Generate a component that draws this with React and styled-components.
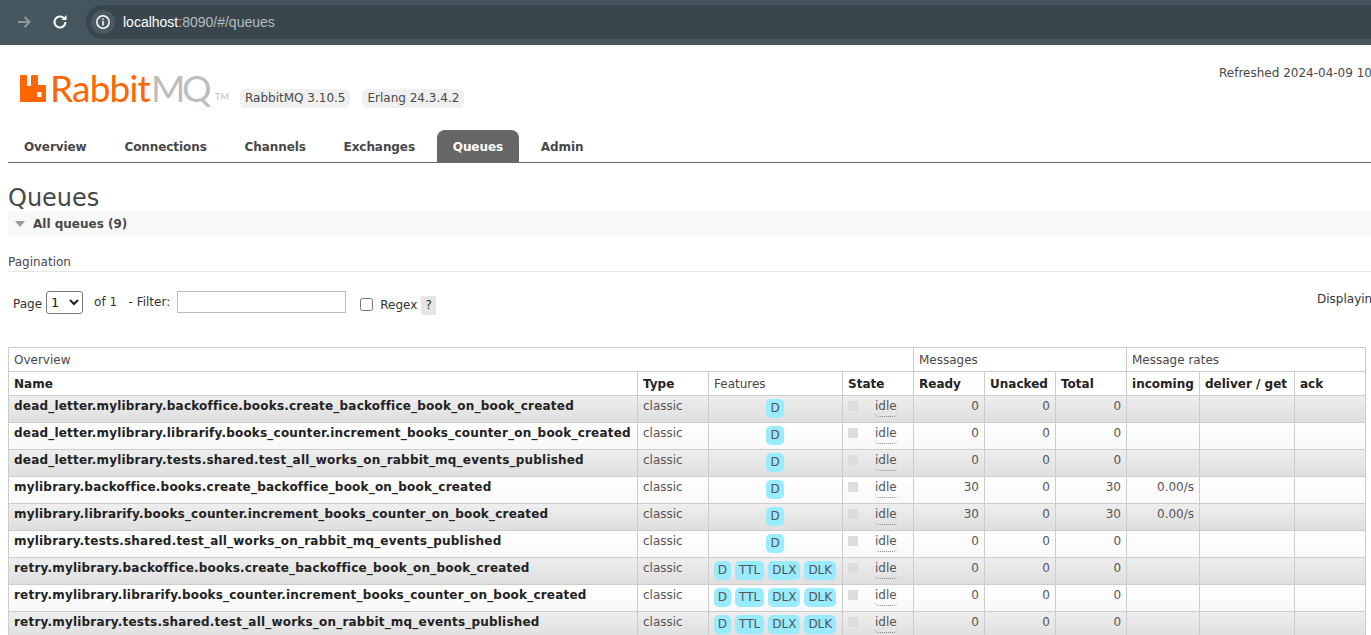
import styled, { createGlobalStyle } from 'styled-components'

const Global = createGlobalStyle`
  html, body {
    margin: 0;
    padding: 0;
    background: #fff;
    overflow: hidden;
  }
  body {
    font-family: "DejaVu Sans", Verdana, sans-serif;
    font-size: 12px;
    color: #484848;
  }
`;

const Page = styled.div`
  width: 1371px;
  height: 635px;
  overflow: hidden;
`;

const BrowserBar = styled.div`
  height: 45px;
  background: #45565f;
  display: flex;
  align-items: flex-start;
  padding: 5px 0 0 16px;
  box-sizing: border-box;
`;

const NavIcon = styled.svg`
  width: 16px;
  height: 16px;
  margin: 9px 20px 0 0;
  fill: none;
  stroke: ${(p) => (p.$dim ? '#8c989e' : '#ffffff')};
  stroke-width: 2;
`;

const AddressBar = styled.div`
  flex: 1;
  height: 34px;
  margin-left: -2px;
  border-radius: 17px 0 0 17px;
  background: #3a464d;
  display: flex;
  align-items: center;
  padding-left: 5px;
  font-family: "Liberation Sans", Arial, sans-serif;
  font-size: 14px;
  color: #b4bcc0;
`;

const InfoBadge = styled.span`
  width: 24px;
  height: 24px;
  border-radius: 50%;
  background: #4a5a62;
  display: flex;
  align-items: center;
  justify-content: center;
  margin-right: 8px;
`;

const Host = styled.span`
  color: #fff;
`;

const Header = styled.div`
  height: 85px;
  position: relative;
  display: flex;
  align-items: flex-start;
  padding: 28px 0 0 20px;
  box-sizing: border-box;
`;

const Logo = styled.div`
  display: flex;
  align-items: flex-end;
  height: 34px;
  width: 204px;
  font-family: Lato, sans-serif;
  font-size: 37px;
  line-height: 34px;
`;

const LogoMark = styled.svg`
  width: 26px;
  height: 27px;
  margin-bottom: 5px;
  flex: none;
`;

const LogoOrange = styled.span`
  color: #ff6600;
  margin: 0 0 2px 4px;
  letter-spacing: -0.8px;
`;

const LogoGrey = styled.span`
  color: #bdbdbd;
  margin: 0 0 2px 1px;
  letter-spacing: -3.5px;
`;

const Tm = styled.span`
  font-size: 9px;
  line-height: 12px;
  color: #bdbdbd;
  margin: 0 0 4px 7px;
`;

const Versions = styled.div`
  display: flex;
  gap: 12px;
  margin: 16px 0 0 16px;
`;

const Version = styled.span`
  background: #f0f0f0;
  border-radius: 5px;
  padding: 2px 5px;
  height: 15px;
  line-height: 15px;
`;

const Refreshed = styled.div`
  position: absolute;
  left: 1219px;
  top: 21px;
  white-space: nowrap;
`;

const Tabs = styled.ul`
  list-style: none;
  display: flex;
  margin: 0 0 0 8px;
  padding: 0;
  height: 32px;
  border-bottom: 1px solid #666;
`;

const Tab = styled.li`
  height: 32px;
  box-sizing: border-box;
  padding: 1px 16px 0;
  margin-right: 5.8px;
  display: flex;
  align-items: center;
  font-weight: bold;
  letter-spacing: -0.08px;
  border-radius: ${(p) => (p.$active ? '8px 8px 0 0' : '0')};
  background: ${(p) => (p.$active ? '#666' : 'transparent')};
  color: ${(p) => (p.$active ? '#fff' : '#484848')};
`;

const Main = styled.div`
  padding: 0 0 0 8px;
`;

const Title = styled.h1`
  margin: 0;
  padding-top: 22px;
  font-size: 24px;
  line-height: 26px;
  font-weight: normal;
`;

const Section = styled.div`
  height: 25px;
  background: #f8f8f8;
  display: flex;
  align-items: center;
  font-weight: bold;
  gap: 8px;
  padding-left: 7px;
`;

const Arrow = styled.span`
  width: 0;
  height: 0;
  border-left: 5px solid transparent;
  border-right: 5px solid transparent;
  border-top: 6px solid #999;
`;

const PaginationLabel = styled.div`
  margin-top: 19px;
  height: 15px;
  line-height: 15px;
  border-bottom: 1px solid #e6e6e6;
  padding-bottom: 1px;
`;

const PagerRow = styled.div`
  display: flex;
  align-items: center;
  height: 36px;
  margin-top: 14px;
  padding-left: 5px;
  position: relative;
  color: #333;
`;

const PagerText = styled.span`
  margin: ${(p) => (p.$raised ? '0 0 4px' : p.$lowered ? '2px 0 0' : '0')};
  white-space: pre;
`;

const PageSelect = styled.select`
  width: 37px;
  height: 23px;
  margin: 0 11px 4px 4px;
  font-family: inherit;
  font-size: 13px;
  background: #fff;
  border: 1px solid #767676;
  border-radius: 3px;
  color: #222;
`;

const FilterInput = styled.input`
  width: 165px;
  height: 18px;
  margin: 0 14px 4px 7px;
  border: 1px solid #bbb;
  padding: 1px;
  background: #fff;
`;

const RegexBox = styled.input`
  width: 13px;
  height: 13px;
  margin: 0 7px 0 0;
`;

const Help = styled.span`
  width: 15px;
  height: 19px;
  line-height: 19px;
  background: #e6e6e6;
  text-align: center;
  margin: 2px 0 0 4px;
`;

const Displaying = styled.span`
  position: absolute;
  left: 1309px;
  top: 6px;
  white-space: nowrap;
`;

const QueueTable = styled.table`
  table-layout: fixed;
  width: 1358px;
  margin-top: 25px;
  border-collapse: collapse;
`;

const GroupCell = styled.th`
  height: 24px;
  padding: 0 5px;
  box-sizing: border-box;
  border: 1px solid #ccc;
  font-weight: normal;
  text-align: left;
  background: #fff;
`;

const HeadCell = styled.th`
  height: 24px;
  padding: 0 5px;
  box-sizing: border-box;
  border: 1px solid #ccc;
  font-weight: ${(p) => (p.$plain ? 'normal' : 'bold')};
  color: ${(p) => (p.$plain ? '#484848' : '#222')};
  text-align: left;
  white-space: nowrap;
  background: #fff;
`;

const Row = styled.tr`
  background: ${(p) =>
    p.$alt
      ? 'linear-gradient(to bottom, #eeeeee, #dedede)'
      : 'linear-gradient(to bottom, #ffffff, #f8f8f8)'};
`;

const Cell = styled.td`
  height: 27px;
  padding: 3px 5px 0;
  box-sizing: border-box;
  border: 1px solid #ccc;
  vertical-align: top;
  line-height: 14px;
  white-space: nowrap;
  text-align: ${(p) => (p.$right ? 'right' : 'left')};
  color: ${(p) => (p.$strong ? '#222' : '#555')};
  font-weight: ${(p) => (p.$strong ? 'bold' : 'normal')};
  letter-spacing: ${(p) => (p.$strong ? '0.2px' : '0')};
`;

const FeatureCell = styled(Cell)`
  padding: 3px 0 0;
`;

const Features = styled.div`
  display: flex;
  justify-content: center;
  gap: 4px;
  padding-right: 1px;
`;

const Feature = styled.span`
  background: #99ebff;
  border-radius: 5px;
  padding: 0 4px;
  height: 19px;
  line-height: 19px;
  color: #555;
`;

const StateWrap = styled.div`
  display: flex;
  align-items: flex-start;
`;

const StateDot = styled.span`
  width: 10px;
  height: 10px;
  margin-top: 2px;
  background: #ddd;
  margin-right: 17px;
`;

const Idle = styled.span`
  border-bottom: 1px dotted #888;
  border-radius: 0 0 4px 4px;
  line-height: 15px;
  padding-bottom: 2px;
`;

const queues = [
  ['dead_letter.mylibrary.backoffice.books.create_backoffice_book_on_book_created', 'D', 0, 0, 0, ''],
  ['dead_letter.mylibrary.librarify.books_counter.increment_books_counter_on_book_created', 'D', 0, 0, 0, ''],
  ['dead_letter.mylibrary.tests.shared.test_all_works_on_rabbit_mq_events_published', 'D', 0, 0, 0, ''],
  ['mylibrary.backoffice.books.create_backoffice_book_on_book_created', 'D', 30, 0, 30, '0.00/s'],
  ['mylibrary.librarify.books_counter.increment_books_counter_on_book_created', 'D', 30, 0, 30, '0.00/s'],
  ['mylibrary.tests.shared.test_all_works_on_rabbit_mq_events_published', 'D', 0, 0, 0, ''],
  ['retry.mylibrary.backoffice.books.create_backoffice_book_on_book_created', 'D TTL DLX DLK', 0, 0, 0, ''],
  ['retry.mylibrary.librarify.books_counter.increment_books_counter_on_book_created', 'D TTL DLX DLK', 0, 0, 0, ''],
  ['retry.mylibrary.tests.shared.test_all_works_on_rabbit_mq_events_published', 'D TTL DLX DLK', 0, 0, 0, ''],
];

const tabs = ['Overview', 'Connections', 'Channels', 'Exchanges', 'Queues', 'Admin'];
const widths = [629, 71, 134, 71, 71, 71, 71, 73, 95, 71];

const App = () => {
  return (
    <Page>
      <Global />
      <BrowserBar>
        <NavIcon viewBox="0 0 16 16" $dim>
          <path d="M2 8h11M8.500 3l5 5-5 5" />
        </NavIcon>
        <NavIcon viewBox="0 0 16 16">
          <path d="M13.500 8a5.500 5.500 0 1 1-1.600-3.900" />
          <path d="M14.500 1v5h-5z" fill="#fff" stroke="none" />
        </NavIcon>
        <AddressBar>
          <InfoBadge>
            <svg width="16" height="16" viewBox="0 0 16 16" fill="none" stroke="#fff" strokeWidth="1.5">
              <circle cx="8" cy="8" r="6.2" />
              <path d="M8 7v4.400M8 4.400v1.500" />
            </svg>
          </InfoBadge>
          <Host>localhost</Host>:8090/#/queues
        </AddressBar>
      </BrowserBar>
      <Header>
        <Logo>
          <LogoMark viewBox="0 0 26 27">
            <path
              fill="#ff6600"
              fillRule="evenodd"
              d="M0 1q0-1 1-1h5q1 0 1 1v10h4V1q0-1 1-1h5q1 0 1 1v9h7q1 0 1 1v15q0 1-1 1H1q-1 0-1-1zM17 17v5h4.500v-5z"
            />
          </LogoMark>
          <LogoOrange>Rabbit</LogoOrange>
          <LogoGrey>MQ</LogoGrey>
          <Tm>TM</Tm>
        </Logo>
        <Versions>
          <Version>RabbitMQ 3.10.5</Version>
          <Version>Erlang 24.3.4.2</Version>
        </Versions>
        <Refreshed>Refreshed 2024-04-09 10:36:07</Refreshed>
      </Header>
      <Tabs>
        {tabs.map((t) => (
          <Tab key={t} $active={t === 'Queues'}>
            {t}
          </Tab>
        ))}
      </Tabs>
      <Main>
        <Title>Queues</Title>
        <Section>
          <Arrow />
          All queues (9)
        </Section>
        <PaginationLabel>Pagination</PaginationLabel>
        <PagerRow>
          <PagerText>Page</PagerText>
          <PageSelect defaultValue="1">
            <option>1</option>
          </PageSelect>
          <PagerText $raised>{'of 1   - Filter:'}</PagerText>
          <FilterInput />
          <RegexBox type="checkbox" />
          <PagerText $lowered>Regex</PagerText>
          <Help>?</Help>
          <Displaying>Displaying 9 items</Displaying>
        </PagerRow>
        <QueueTable>
          <colgroup>
            {widths.map((w, i) => (
              <col key={i} width={w} />
            ))}
          </colgroup>
          <thead>
            <tr>
              <GroupCell colSpan={4}>Overview</GroupCell>
              <GroupCell colSpan={3}>Messages</GroupCell>
              <GroupCell colSpan={3}>Message rates</GroupCell>
            </tr>
            <tr>
              <HeadCell>Name</HeadCell>
              <HeadCell>Type</HeadCell>
              <HeadCell $plain>Features</HeadCell>
              <HeadCell>State</HeadCell>
              <HeadCell>Ready</HeadCell>
              <HeadCell>Unacked</HeadCell>
              <HeadCell>Total</HeadCell>
              <HeadCell>incoming</HeadCell>
              <HeadCell>deliver / get</HeadCell>
              <HeadCell>ack</HeadCell>
            </tr>
          </thead>
          <tbody>
            {queues.map(([name, feats, ready, unacked, total, rate], i) => (
              <Row key={name} $alt={i % 2 === 0}>
                <Cell $strong>{name}</Cell>
                <Cell>classic</Cell>
                <FeatureCell>
                  <Features>
                    {feats.split(' ').map((f) => (
                      <Feature key={f}>{f}</Feature>
                    ))}
                  </Features>
                </FeatureCell>
                <Cell>
                  <StateWrap>
                    <StateDot />
                    <Idle>idle</Idle>
                  </StateWrap>
                </Cell>
                <Cell $right>{ready}</Cell>
                <Cell $right>{unacked}</Cell>
                <Cell $right>{total}</Cell>
                <Cell $right>{rate}</Cell>
                <Cell />
                <Cell />
              </Row>
            ))}
          </tbody>
        </QueueTable>
      </Main>
    </Page>
  )
}

export default App
